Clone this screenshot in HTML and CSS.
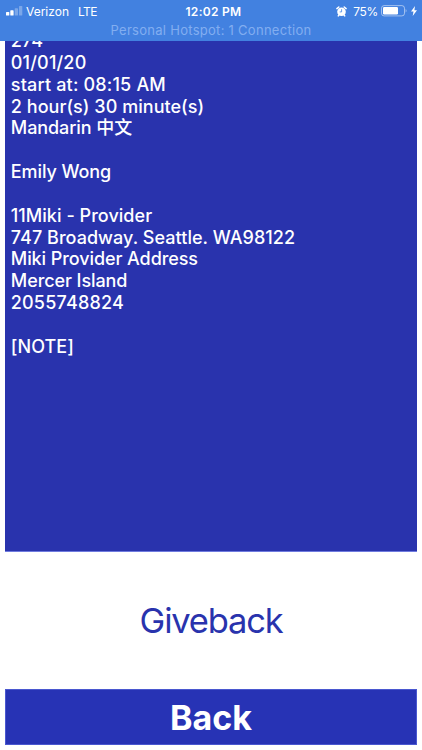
FILE: index.html
```
<!DOCTYPE html>
<html lang="en">
<head>
  <meta charset="UTF-8">
  <title>Appointment</title>
  <link rel="stylesheet" href="styles.css">
</head>
<body>
  <header class="status">
    <div class="status-row">
      <div class="left">
        <svg class="signal" width="17" height="10" viewBox="0 0 17 10">
          <rect x="0" y="6" width="3.3" height="3.5" rx=".6"/>
          <rect x="4.3" y="4.3" width="3.3" height="5.2" rx=".6"/>
          <rect x="8.7" y="2.3" width="3.3" height="7.2" rx=".6" opacity=".3"/>
          <rect x="13" y="0" width="3.3" height="9.5" rx=".6" opacity=".3"/>
        </svg>
        <span class="carrier">Verizon</span>
        <span class="network">LTE</span>
      </div>
      <div class="time">12:02 PM</div>
      <div class="right">
        <svg class="alarm" width="11" height="11" viewBox="0 0 11 11">
          <circle cx="5.5" cy="5.7" r="4.3" fill="#fff"/>
          <path d="M.9 2.6L2.8 1M8.2 1l1.9 1.6M2.9 9l-.6.9M8.1 9l.6.9" stroke="#fff" stroke-width="1.5" stroke-linecap="round"/>
          <path d="M5.6 3.2v2.7H3.7" fill="none" stroke="#4281e0" stroke-width=".8"/>
        </svg>
        <span class="percent">75%</span>
        <svg class="battery" width="26" height="12" viewBox="0 0 26 12">
          <rect x=".5" y=".6" width="23" height="10.3" rx="2.6" fill="none" stroke="#fff" stroke-opacity=".5"/>
          <rect x="2" y="2.1" width="15" height="7.3" rx="1.2" fill="#fff"/>
          <path d="M24.6 4c1.3.5 1.3 3 0 3.5z" fill="#fff" opacity=".5"/>
        </svg>
        <svg class="bolt" width="6" height="10" viewBox="0 0 6 10">
          <path d="M4 0L0 5.6h2.5L1.7 10 6 4.2H3.4z" fill="#fff"/>
        </svg>
      </div>
    </div>
    <div class="hotspot">Personal Hotspot: 1 Connection</div>
  </header>

  <main class="details">
    <p>274</p>
    <p class="num">01/01/20</p>
    <p class="num">start at: 08:15 AM</p>
    <p>2 hour(s) 30 minute(s)</p>
    <p class="name">Mandarin 中文</p>
    <br>
    <p class="name">Emily Wong</p>
    <br>
    <p>11Miki - Provider</p>
    <p>747 Broadway. Seattle. WA98122</p>
    <p class="name">Miki Provider Address</p>
    <p class="name">Mercer Island</p>
    <p class="num">2055748824</p>
    <br>
    <p>[NOTE]</p>
  </main>

  <button class="giveback">Giveback</button>
  <button class="back">Back</button>
</body>
</html>
```

FILE: styles.css
```
* { box-sizing: border-box; }
body { margin: 0; height: 750px; overflow: hidden; background: #fff; font-family: Inter, "Noto Sans CJK SC", sans-serif; display: flex; flex-direction: column; }
.status { height: 41px; flex: none; background: #4281e0; color: #fff; font-size: 12px; }
.status-row { height: 22px; display: grid; grid-template-columns: 1fr auto 1fr; align-items: center; padding: 0 5px 0 6px; }
.left, .right { display: flex; align-items: center; }
.right { justify-content: flex-end; }
.signal { fill: #fff; margin-right: 3px; }
.network { margin-left: 9px; letter-spacing: -0.6px; }
.time { font-weight: 600; letter-spacing: 0.3px; padding-left: 4px; }
.percent { margin: 0 3px 0 6px; letter-spacing: -0.3px; }
.bolt { margin-left: 4px; }
.hotspot { text-align: center; color: #82aef0; font-size: 13px; line-height: 17px; letter-spacing: 0.28px; }
.details { height: 510.5px; flex: none; margin: 0 5.3px; padding-left: 5.5px; overflow: hidden; background: #2933ad; color: #fff; font-size: 18px; font-weight: 500; line-height: 21.85px; border-bottom: 1px solid #6f7bdf; }
.details p { margin: 0; height: 21.85px; letter-spacing: 0.04px; }
.details p:first-child { margin-top: -11px; }
.details .num { letter-spacing: 0.18px; }
.details .name { letter-spacing: -0.08px; }
button { border: 0; padding: 0; font-family: inherit; font-size: 34px; }
.giveback { height: 137px; flex: none; background: #fff; color: #2933ad; font-size: 34.5px; letter-spacing: -1.2px; }
.back { height: 56px; flex: none; margin: 0 5.3px; background: #2733b5; border: 1px solid #4a58d0; color: #fff; font-weight: 700; padding-top: 2px; }
```
